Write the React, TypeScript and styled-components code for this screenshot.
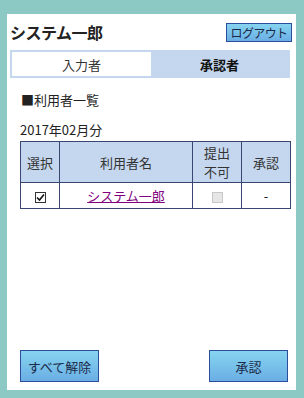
import React from 'react'
import styled, { createGlobalStyle } from 'styled-components'

const GlobalStyle = createGlobalStyle`
  html, body {
    margin: 0;
    padding: 0;
    background: #8cc8c4;
  }
  body {
    font-family: "Noto Sans CJK JP", "Noto Sans", sans-serif;
    color: #222;
  }
`

const Frame = styled.div`
  width: 304px;
  height: 398px;
  box-sizing: border-box;
  padding: 14px 8px 8px 7px;
`

const Panel = styled.div`
  height: 100%;
  background: #fff;
  display: flex;
  flex-direction: column;
  padding: 9px 4px 8px 3px;
  box-sizing: border-box;
`

const Header = styled.div`
  display: flex;
  justify-content: space-between;
  align-items: center;
  height: 19px;
`

const Title = styled.h1`
  margin: 0;
  font-size: 16px;
  font-weight: bold;
  line-height: 19px;
  letter-spacing: -0.5px;
`

const BlueButton = styled.button<{ $w: number; $h: number; $small?: boolean }>`
  width: ${(p) => p.$w}px;
  height: ${(p) => p.$h}px;
  padding: 0;
  border: 1px solid #2c4c9c;
  background: linear-gradient(#86d4f0, #6aaee4);
  font-family: inherit;
  font-size: ${(p) => (p.$small ? 12 : 13)}px;
  letter-spacing: ${(p) => (p.$small ? '-0.6px' : '0')};
  white-space: nowrap;
  color: #1a2a4a;
  line-height: 1;
  cursor: pointer;
`

const Tabs = styled.div`
  margin: 8px 2px 0 0;
  display: grid;
  grid-template-columns: 139px 1fr;
  background: #c5d7ee;
  padding: 2px;
  height: 24px;
`

const Tab = styled.div<{ $active?: boolean }>`
  display: flex;
  align-items: center;
  justify-content: center;
  background: ${(p) => (p.$active ? '#c5d7ee' : '#fff')};
  font-size: 13px;
  font-weight: ${(p) => (p.$active ? 'bold' : 'normal')};
  color: ${(p) => (p.$active ? '#111' : '#333')};
`

const Content = styled.div`
  padding: 0 6px 0 10px;
`

const SectionTitle = styled.div`
  margin-top: 13px;
  font-size: 13px;
  line-height: 18px;
  padding-left: 1px;
`

const Month = styled.div`
  margin-top: 12px;
  font-size: 13px;
  line-height: 18px;
`

const Table = styled.table`
  margin-top: 2px;
  width: 270px;
  border-collapse: collapse;
  font-size: 13px;
  table-layout: fixed;
`

const Col = styled.col<{ $w: number }>`
  width: ${(p) => p.$w}px;
`

const Th = styled.th`
  height: 40px;
  background: #c5d7ee;
  border: 1px solid #3a4672;
  font-weight: normal;
  line-height: 19px;
  padding: 0;
  color: #333;
`

const Td = styled.td`
  height: 25px;
  border: 1px solid #3a4672;
  text-align: center;
  padding: 0;
`

const Box = styled.span<{ $disabled?: boolean }>`
  display: inline-flex;
  align-items: center;
  justify-content: center;
  width: 11px;
  height: 11px;
  box-sizing: border-box;
  vertical-align: middle;
  border: 1px solid ${(p) => (p.$disabled ? '#c8c8c8' : '#333')};
  background: ${(p) => (p.$disabled ? '#e6e6e6' : '#fff')};
`

const NameLink = styled.a`
  color: #800080;
  text-decoration: underline;
  font-size: 13px;
`

const Footer = styled.div`
  margin-top: auto;
  display: flex;
  justify-content: space-between;
  padding: 0 4px 0 10px;
`

const Check = () => (
  <Box>
    <svg width="9" height="9" viewBox="0 0 9 9">
      <path d="M1 4.5 L3.5 7 L8 1.5" fill="none" stroke="#111" strokeWidth="1.6" />
    </svg>
  </Box>
)

export default function App() {
  return (
    <>
      <GlobalStyle />
      <Frame>
        <Panel>
          <Header>
            <Title>システム一郎</Title>
            <BlueButton $w={66} $h={19} $small>
              ログアウト
            </BlueButton>
          </Header>
          <Tabs>
            <Tab>入力者</Tab>
            <Tab $active>承認者</Tab>
          </Tabs>
          <Content>
            <SectionTitle>■利用者一覧</SectionTitle>
            <Month>2017年02月分</Month>
            <Table>
              <colgroup>
                <Col $w={39} />
                <Col $w={133} />
                <Col $w={49} />
                <Col $w={49} />
              </colgroup>
              <thead>
                <tr>
                  <Th>選択</Th>
                  <Th>利用者名</Th>
                  <Th>
                    提出
                    <br />
                    不可
                  </Th>
                  <Th>承認</Th>
                </tr>
              </thead>
              <tbody>
                <tr>
                  <Td>
                    <Check />
                  </Td>
                  <Td>
                    <NameLink href="#">システム一郎</NameLink>
                  </Td>
                  <Td>
                    <Box $disabled />
                  </Td>
                  <Td>-</Td>
                </tr>
              </tbody>
            </Table>
          </Content>
          <Footer>
            <BlueButton $w={79} $h={32}>すべて解除</BlueButton>
            <BlueButton $w={79} $h={32}>承認</BlueButton>
          </Footer>
        </Panel>
      </Frame>
    </>
  )
}
